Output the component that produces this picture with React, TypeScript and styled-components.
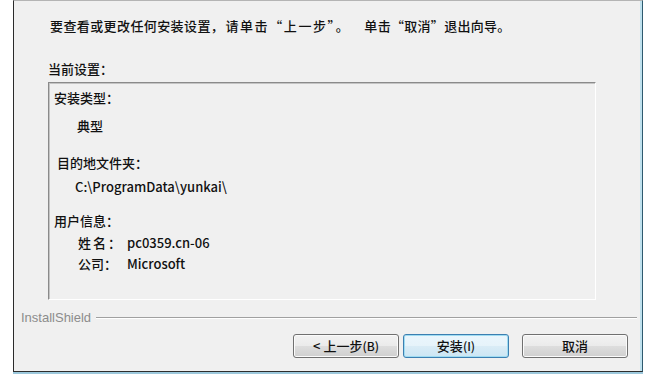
import styled, { createGlobalStyle } from 'styled-components'

const GlobalStyle = createGlobalStyle`
  html, body {
    margin: 0;
    padding: 0;
    background: #ffffff;
  }
  body {
    font-family: "Noto Sans CJK SC", "Noto Sans", sans-serif;
    color: #111111;
  }
`

const Page = styled.div`
  width: 652px;
  height: 379px;
  overflow: hidden;
  background: #ffffff;
`

const Window = styled.div`
  box-sizing: border-box;
  margin-left: 13px;
  width: 630px;
  height: 372px;
  display: flex;
  flex-direction: column;
  background: #f0f0f0;
  border-top: 1px solid #b4b4b4;
  border-left: 1px solid #2b2b2b;
  border-right: 1px solid #2e5a6e;
  border-bottom: 1px solid #2d2d2d;
  box-shadow: inset -2px 0 0 #bfe1ee, 0 2px 0 #9cc8dc;
`

const Intro = styled.div`
  display: flex;
  padding: 17px 0 0 36px;
  font-size: 13px;
  line-height: 16px;
  font-weight: 500;
  white-space: nowrap;
`

const Phrase = styled.span<{ $spacing?: number; $offset?: number }>`
  letter-spacing: ${({ $spacing }) => $spacing ?? 0}px;
  margin-left: ${({ $offset }) => $offset ?? 0}px;
`

const SectionLabel = styled.div`
  margin: 27px 0 0 34px;
  font-size: 13px;
  line-height: 16px;
  font-weight: 500;
`

const SettingsBox = styled.div`
  box-sizing: border-box;
  margin: 5px 0 0 34px;
  width: 548px;
  height: 218px;
  display: flex;
  flex-direction: column;
  padding-top: 7px;
  border: 1px solid;
  border-color: #8a8a8a #ffffff #ffffff #8a8a8a;
  box-shadow: inset 1px 1px 0 #c4c4c4;
`

const Line = styled.div<{ $indent: number; $gap: number }>`
  display: flex;
  margin-top: ${({ $gap }) => $gap}px;
  padding-left: ${({ $indent }) => $indent}px;
  font-size: 13px;
  line-height: 16px;
  font-weight: 500;
  white-space: nowrap;
`

const Field = styled.span<{ $spread?: boolean }>`
  width: 49px;
  letter-spacing: ${({ $spread }) => ($spread ? '2px' : '0')};
`

const Brand = styled.div`
  display: flex;
  align-items: center;
  gap: 5px;
  margin-top: 10px;
  padding: 0 5px 0 7px;
  height: 14px;
  font-family: "Liberation Sans", Arial, sans-serif;
  font-size: 13px;
  color: #8c8c8c;
`

const Rule = styled.div`
  flex: 1;
  height: 1px;
  background: #a0a0a0;
  box-shadow: 0 1px 0 #ffffff;
`

const ButtonRow = styled.div`
  display: flex;
  justify-content: flex-end;
  margin-top: 10px;
  padding-right: 14px;
`

const Button = styled.button<{ $primary?: boolean; $gapLeft?: number }>`
  box-sizing: border-box;
  width: 106px;
  height: 24px;
  margin: 0 0 0 ${({ $gapLeft }) => $gapLeft ?? 0}px;
  padding: 0;
  font-family: "Noto Sans CJK SC", "Noto Sans", sans-serif;
  font-size: 13px;
  line-height: 16px;
  font-weight: 500;
  color: #111111;
  border-radius: 3px;
  border: 1px solid ${({ $primary }) => ($primary ? '#3c7fb1' : '#707070')};
  background: ${({ $primary }) =>
    $primary
      ? 'linear-gradient(#eaf6fd 0%, #e6f3fa 48%, #d9ecf6 52%, #cce6f4 100%)'
      : 'linear-gradient(#f2f2f2 0%, #ebebeb 48%, #dddddd 52%, #cfcfcf 100%)'};
  box-shadow: inset 0 0 0 1px ${({ $primary }) => ($primary ? '#9fdcf2' : '#fbfbfb')};
`

const Latin = styled.span`
  font-size: 12px;
`

const App = () => {
  return (
    <Page>
      <GlobalStyle />
      <Window>
        <Intro>
          <Phrase $spacing={0.4}>要查看或更改任何安装设置</Phrase>
          <Phrase $spacing={1.6}>，请单击“上一步”。</Phrase>
          <Phrase $offset={14} $spacing={0.3}>单击“取消”退出向导。</Phrase>
        </Intro>
        <SectionLabel>当前设置：</SectionLabel>
        <SettingsBox>
          <Line $indent={5} $gap={0}>安装类型：</Line>
          <Line $indent={28} $gap={12}>典型</Line>
          <Line $indent={8} $gap={21}>目的地文件夹：</Line>
          <Line $indent={26} $gap={8}>C:\ProgramData\yunkai\</Line>
          <Line $indent={5} $gap={18}>用户信息：</Line>
          <Line $indent={29} $gap={6}>
            <Field $spread>姓名：</Field>pc0359.cn-06
          </Line>
          <Line $indent={29} $gap={5}>
            <Field>公司：</Field>Microsoft
          </Line>
        </SettingsBox>
        <Brand>
          InstallShield
          <Rule />
        </Brand>
        <ButtonRow>
          <Button>
            &lt; 上一步<Latin>(B)</Latin>
          </Button>
          <Button $primary $gapLeft={4}>
            安装<Latin>(I)</Latin>
          </Button>
          <Button $gapLeft={13}>取消</Button>
        </ButtonRow>
      </Window>
    </Page>
  )
}

export default App
